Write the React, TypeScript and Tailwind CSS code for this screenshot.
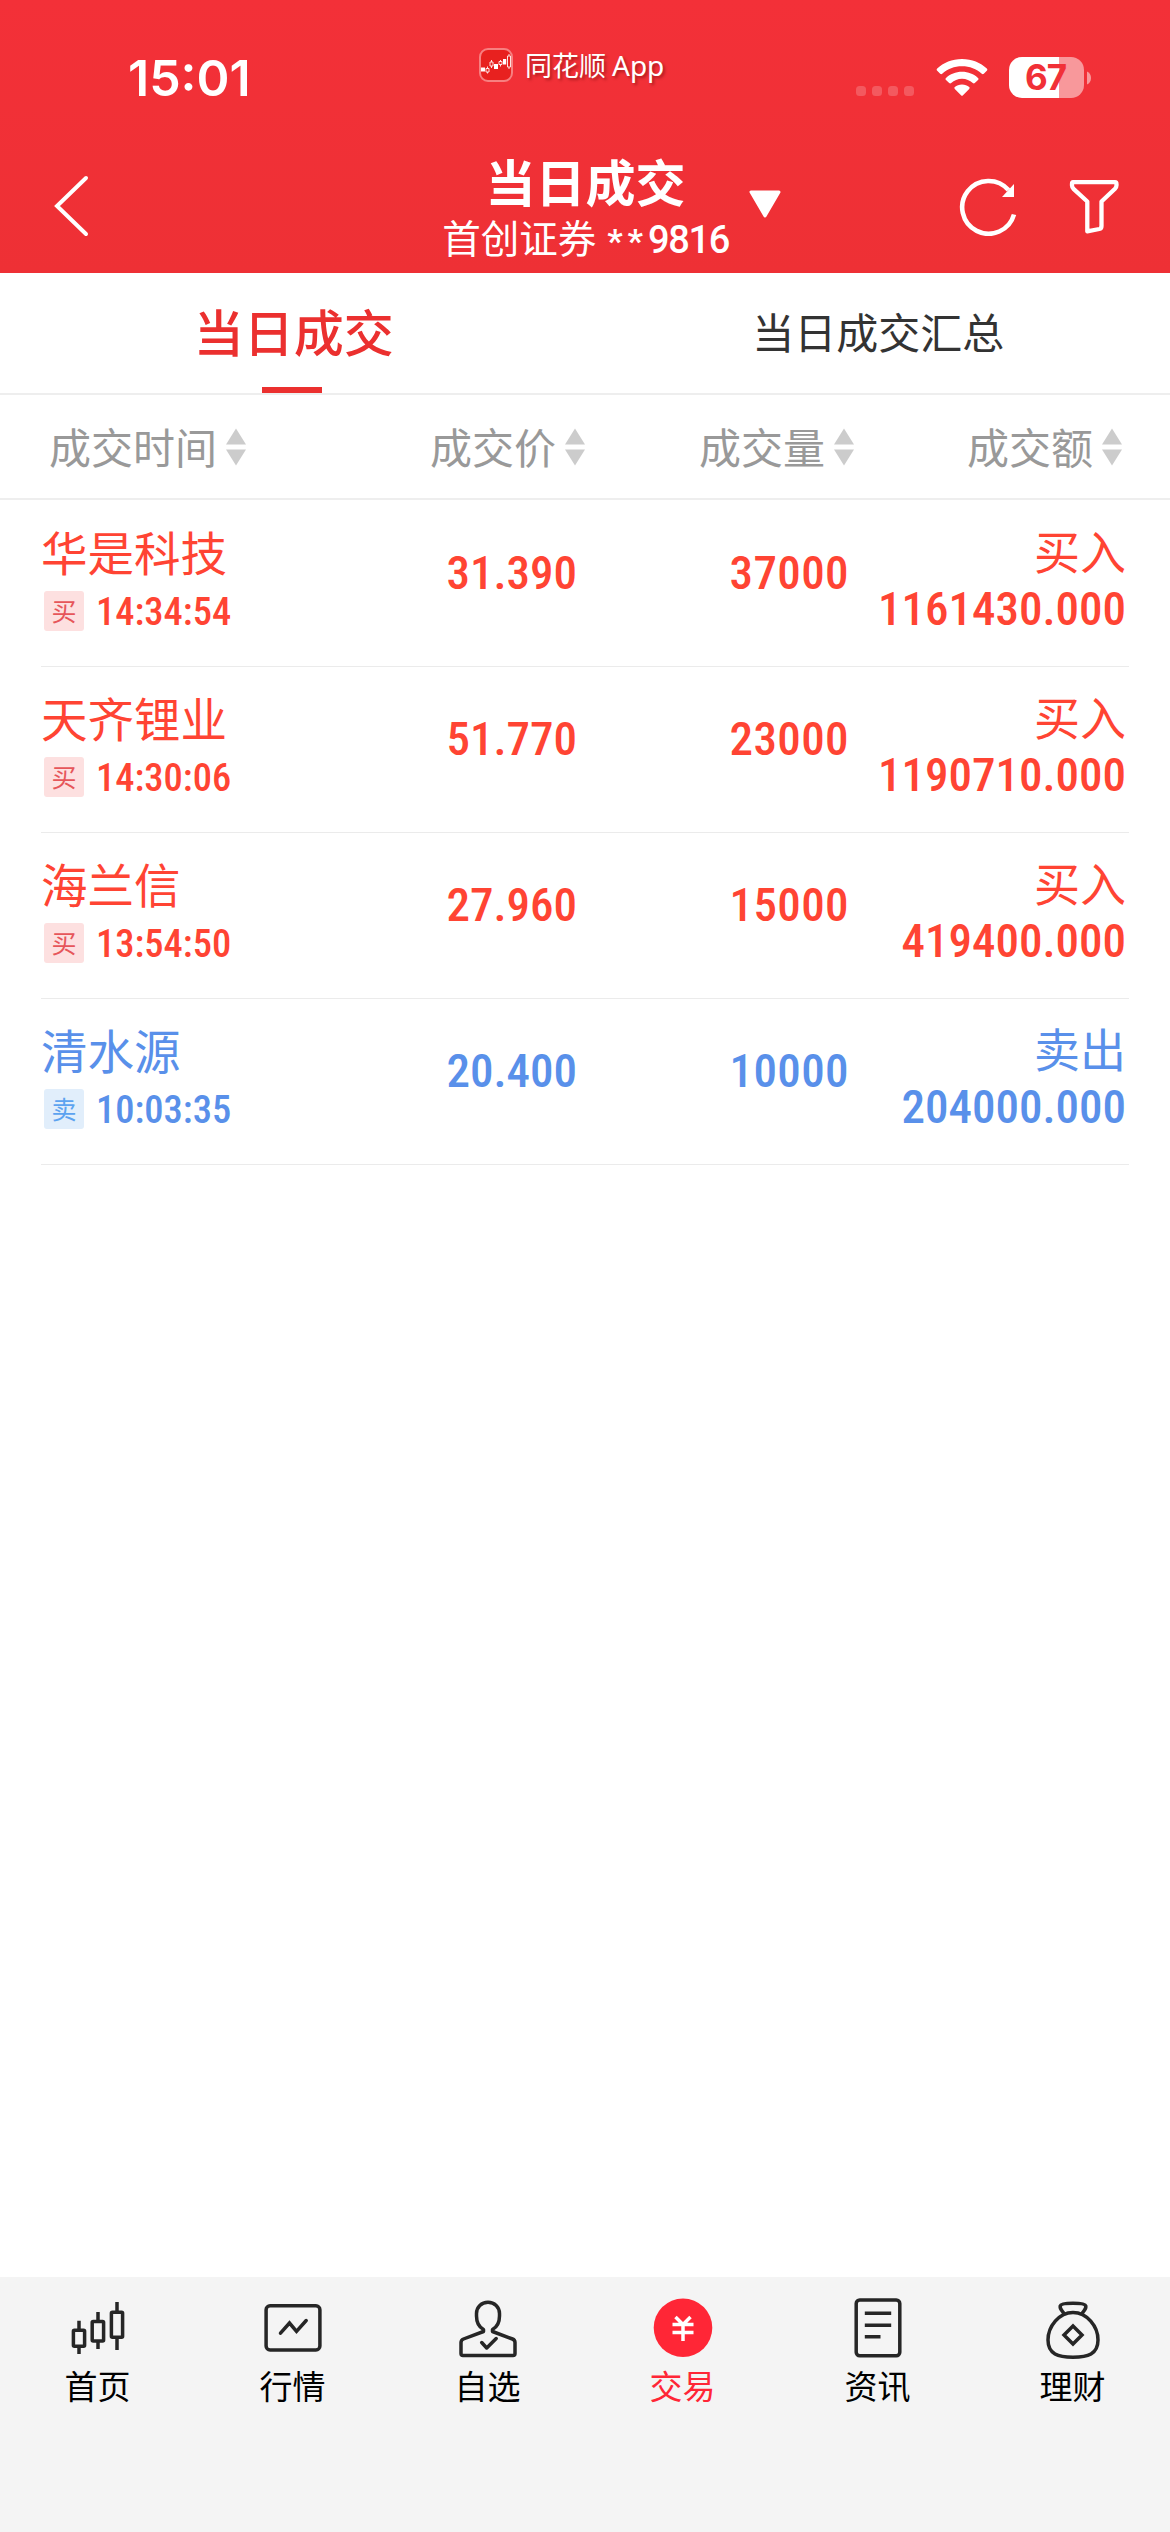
import type { ReactNode } from 'react';
import { clsx } from 'clsx';

type Side = 'buy' | 'sell';

interface Trade {
  name: string;
  time: string;
  price: string;
  volume: string;
  amount: string;
  side: Side;
}

const trades: Trade[] = [
  { name: '华是科技', time: '14:34:54', price: '31.390', volume: '37000', amount: '1161430.000', side: 'buy' },
  { name: '天齐锂业', time: '14:30:06', price: '51.770', volume: '23000', amount: '1190710.000', side: 'buy' },
  { name: '海兰信', time: '13:54:50', price: '27.960', volume: '15000', amount: '419400.000', side: 'buy' },
  { name: '清水源', time: '10:03:35', price: '20.400', volume: '10000', amount: '204000.000', side: 'sell' },
];

function StatusBar() {
  return (
    <div className="flex h-[146px] items-start text-white">
      <div className="ml-[128px] mt-[48px] w-[351px] font-['Inter',sans-serif] text-[50px] font-semibold leading-[60px]">
        15:01
      </div>
      <div className="mt-[48px] flex w-[377px] items-center gap-[12px]">
        <svg width="34" height="34" viewBox="0 0 34 34">
          <rect x="1" y="1" width="32" height="32" rx="8" fill="#e8211f" stroke="#f77f80" strokeWidth="2" />
          <g fill="#fff">
            <rect x="2" y="19.5" width="4" height="4" />
            <rect x="15" y="16" width="4" height="5" />
            <rect x="24" y="11" width="3.2" height="5.5" />
          </g>
          <g fill="none" stroke="#fde0df" strokeWidth="1">
            <path d="M7 20.5h3v3.5h-3zM8.5 18.5v2M8.5 24v1.5" />
            <path d="M11 14h3v4h-3zM12.5 12v2M12.5 18v2" />
            <path d="M20 13.5h3v3h-3zM21.5 12v1.5M21.5 16.5v2" />
            <path d="M28.5 8h3v11h-3zM30 6v2M30 19v2" />
          </g>
        </svg>
        <span className="text-[27px] leading-[34px] [text-shadow:2px_2px_3px_rgba(90,0,0,0.45)]">
          同花顺<span className="ml-[6px] font-['Noto_Sans',sans-serif] text-[28px]">App</span>
        </span>
      </div>
      <div className="mt-[86px] flex gap-[6px]">
        {[0, 1, 2, 3].map((i) => (
          <span key={i} className="size-[10px] rounded-[3.5px] bg-white/20" />
        ))}
      </div>
      <svg className="ml-[22px] mt-[58px]" width="52" height="40" viewBox="0 0 52 40" fill="#fff">
        <path d="M26 1C16 1 7.5 4.6 1.2 10.6c-.7.7-.7 1.5 0 2.2l3 3c.6.6 1.3.6 2 0C11.5 10.9 18.3 8.3 26 8.3s14.5 2.6 19.8 7.5c.7.6 1.4.6 2 0l3-3c.7-.7.7-1.5 0-2.2C44.5 4.6 36 1 26 1Z" />
        <path d="M26 13.7c-6.3 0-11.9 2.3-16 6.2-.7.7-.7 1.4 0 2.1l3.2 3c.7.6 1.3.6 2 0 2.9-2.6 6.6-4.2 10.8-4.2s7.9 1.6 10.8 4.2c.7.6 1.3.6 2 0L42 22c.7-.7.7-1.4 0-2.1-4.1-3.9-9.7-6.2-16-6.2Z" />
        <path d="M26 26.5c-2.9 0-5.3.9-7.2 2.6-.6.5-.6 1.2 0 1.8l6.2 6.3c.7.7 1.3.7 2 0l6.2-6.3c.6-.6.6-1.3 0-1.8-1.9-1.7-4.3-2.6-7.2-2.6Z" />
      </svg>
      <div className="ml-[21px] mt-[57px] flex items-center gap-[3px]">
        <div className="flex h-[41px] w-[75px] items-center justify-center rounded-[13px] bg-[linear-gradient(90deg,#fff_67%,#f8989b_67%)] pr-[2px] font-['Inter',sans-serif] text-[35px] font-bold leading-[41px] tracking-[-1px] text-[#f13037]">
          67
        </div>
        <svg width="4" height="14" viewBox="0 0 4 14">
          <path d="M0 0.5C2.5 1.5 4 4 4 7s-1.5 5.5-4 6.5Z" fill="#f8989b" />
        </svg>
      </div>
    </div>
  );
}

function NavBar() {
  return (
    <div className="flex h-[127px] items-start text-white">
      <svg className="ml-[52px] mt-[28px]" width="40" height="64" viewBox="0 0 40 64" fill="none" stroke="#fff" strokeWidth="4">
        <path d="M34 4 5 32l29 28" strokeLinecap="round" />
      </svg>
      <div className="ml-[350px] flex w-[287px] flex-col items-center">
        <h1 className="mt-[7px] text-[50px] font-bold leading-[54px]">当日成交</h1>
        <div className="mt-[7px] flex whitespace-nowrap text-[38.5px] leading-[44px]">
          首创证券
          <span className="ml-[11px] mt-[5px] font-['Roboto',sans-serif] text-[34px] font-bold tracking-[5px]">**</span>
          <span className="mt-[4px] font-['Roboto',sans-serif] text-[38px] font-medium tracking-[-1.4px]">9816</span>
        </div>
      </div>
      <svg className="ml-[19px] mt-[44px]" width="34" height="29" viewBox="0 0 34 29">
        <path d="M3 2h28L17 26Z" fill="#fff" stroke="#fff" strokeWidth="3" strokeLinejoin="round" />
      </svg>
      <svg className="ml-[177px] mt-[30px]" width="60" height="60" viewBox="0 0 60 60" fill="none" stroke="#fff" strokeWidth="4.6">
        <path d="M55 38.5A26.4 26.4 0 1 1 49.5 14" />
        <path d="M55 8v13H43Z" fill="#fff" stroke="none" />
      </svg>
      <svg className="ml-[50px] mt-[33px]" width="50" height="56" viewBox="0 0 50 56" fill="none" stroke="#fff" strokeWidth="4.3">
        <path d="M4 3.2h42q1.5 0 1.5 2v1q0 2-1.5 3.5L32.5 22.5V47q0 2.5-2.2 3l-12 2.3V22.5L4.5 9.8Q3 8.2 3 6.5V5q0-1.8 1-1.8Z" strokeLinejoin="round" />
      </svg>
    </div>
  );
}

function Tabs() {
  return (
    <div className="flex h-[122px] border-b-2 border-[#eeeeee]">
      <div className="flex flex-1 flex-col items-center justify-between pt-[24px] text-[50px] font-medium leading-[66px] text-[#eb302f]">
        <span className="pl-[4px]">当日成交</span>
        <span className="h-[6px] w-[60px] bg-[#eb302f]" />
      </div>
      <div className="flex-1 pl-[3px] pt-[25px] text-center text-[42px] leading-[66px] text-[#333333]">当日成交汇总</div>
    </div>
  );
}

function SortLabel({ children, className }: { children: ReactNode; className: string }) {
  return (
    <div className={clsx('flex items-center gap-[9px]', className)}>
      <span className="whitespace-nowrap pb-[3px]">{children}</span>
      <svg width="20" height="38" viewBox="0 0 20 38" fill="#cccccc">
        <path d="M10 0.5 20 16.5H0ZM0 21.5h20l-10 16Z" />
      </svg>
    </div>
  );
}

function TableHead() {
  return (
    <div className="flex h-[105px] border-b-2 border-[#eeeeee] text-[42px] text-[#999999]">
      <SortLabel className="ml-[49px] w-[381px]">成交时间</SortLabel>
      <SortLabel className="w-[269px]">成交价</SortLabel>
      <SortLabel className="w-[268px]">成交量</SortLabel>
      <SortLabel className="flex-1">成交额</SortLabel>
    </div>
  );
}

function TradeRow({ trade }: { trade: Trade }) {
  const buy = trade.side === 'buy';
  return (
    <div
      className={clsx(
        'mx-[41px] flex h-[166px] items-start border-b border-[#ebebeb]',
        buy ? 'text-[#ff4433]' : 'text-[#5990ea]'
      )}
    >
      <div className="w-[330px] pt-[20px]">
        <div className="text-[46.5px] leading-[60px]">{trade.name}</div>
        <div className="mt-[10px] flex items-start">
          <span
            className={clsx(
              'ml-[3px] h-[40px] w-[40px] rounded-[3px] text-center text-[25px] leading-[38px]',
              buy ? 'bg-[#fde0e0] text-[#e6565a]' : 'bg-[#e1eefb] text-[#5ca3f0]'
            )}
          >
            {buy ? '买' : '卖'}
          </span>
          <span className="ml-[12px] font-['Roboto',sans-serif] text-[38.5px] font-medium leading-[41px] [font-stretch:85%]">
            {trade.time}
          </span>
        </div>
      </div>
      <div className="w-[206px] pt-[47px] text-right font-['Roboto',sans-serif] text-[47px] font-medium leading-[50px] [font-stretch:85%]">
        {trade.price}
      </div>
      <div className="w-[272px] pt-[47px] text-right font-['Roboto',sans-serif] text-[47px] font-medium leading-[50px] tracking-[0.4px] [font-stretch:85%]">
        {trade.volume}
      </div>
      <div className="flex-1 pr-[3px] pt-[18px] text-right">
        <div className="text-[46px] leading-[60px]">{buy ? '买入' : '卖出'}</div>
        <div className="mt-[5px] font-['Roboto',sans-serif] text-[47px] font-medium leading-[50px] [font-stretch:85%]">
          {trade.amount}
        </div>
      </div>
    </div>
  );
}

function TabItem({ label, active, children }: { label: string; active?: boolean; children: ReactNode }) {
  return (
    <div className={clsx('flex flex-1 flex-col items-center pt-[19px]', active ? 'text-[#ff2636]' : 'text-black')}>
      <svg width="60" height="66" viewBox="0 0 60 66" fill="none" stroke="#262626" strokeWidth="3.5" strokeLinejoin="round">
        {children}
      </svg>
      <span className="mt-[1px] text-[33px] leading-[44px]">{label}</span>
    </div>
  );
}

function BottomBar() {
  return (
    <div className="flex h-[255px] bg-[#f4f4f4]">
      <TabItem label="首页">
        <rect x="5.4" y="34.3" width="11.2" height="16" rx="1" />
        <rect x="24.2" y="25.6" width="11.4" height="19.5" rx="1" />
        <rect x="43.4" y="16.3" width="11.2" height="25" rx="1" />
        <path d="M11 24.7v9M11 51v7M30 16v9M30 46v7M49 6v10M49 42v12" />
      </TabItem>
      <TabItem label="行情">
        <rect x="3.1" y="9.7" width="53.8" height="44.3" rx="4" />
        <path d="M17.5 37.2 26.5 27l7 8.3L43.2 24.5" strokeLinecap="round" strokeLinejoin="miter" />
      </TabItem>
      <TabItem label="自选">
        <path d="M25.5 33.5C21 31 18.5 26.5 18.5 20v-2.5C18.5 11 23.5 6.3 30 6.3S41.5 11 41.5 17.5V20c0 6.5-2.5 11-7 13.5V35.5l20 7.5q2.500 1 2.500 3.500V57.500q0 2-2 2H5q-2 0-2-2V46.500q0-2.500 2.500-3.500l20-7.500Z" />
        <path d="m23.7 46.5 5 5.5 9.5-9.5" strokeLinecap="round" />
      </TabItem>
      <TabItem label="交易" active>
        <circle cx="30" cy="31.8" r="29.3" fill="#ff2636" stroke="none" />
        <path d="m22.5 21 7.5 7.5 7.5-7.5M19.5 28.5h21M19.5 36.5h21M30 28.5V45" stroke="#fff" />
      </TabItem>
      <TabItem label="资讯">
        <rect x="8.2" y="4" width="43.6" height="55.7" rx="3.5" />
        <path d="M16.8 17.3h26.4M16.8 29.2h26.4M16.8 40.8h15.7" />
      </TabItem>
      <TabItem label="理财">
        <path d="M30 16.5C16 16.5 5 30.5 5 44c0 6 2 11 7 14 4 2.3 11 3.2 18 3.2S44 60.3 48 58c5-3 7-8 7-14C55 30.5 44 16.5 30 16.5Z" />
        <path d="M21.5 18.5c-1.5-3.5-5-5-4.3-8.5C17.7 8 23 7.2 30 7.2S42.3 8 42.8 10c.7 3.5-2.8 5-4.3 8.5M30 30l9 9-9 9-9-9Z" strokeLinejoin="miter" />
      </TabItem>
    </div>
  );
}

export default function App() {
  return (
    <div className="flex h-[2532px] w-[1170px] flex-col bg-white font-['Noto_Sans_CJK_SC',sans-serif]">
      <header className="h-[273px] bg-linear-to-b from-[#f33038] to-[#ee3035]">
        <StatusBar />
        <NavBar />
      </header>
      <Tabs />
      <TableHead />
      <main className="flex-1 pt-[1px]">
        {trades.map((trade) => (
          <TradeRow key={trade.name} trade={trade} />
        ))}
      </main>
      <BottomBar />
    </div>
  );
}
